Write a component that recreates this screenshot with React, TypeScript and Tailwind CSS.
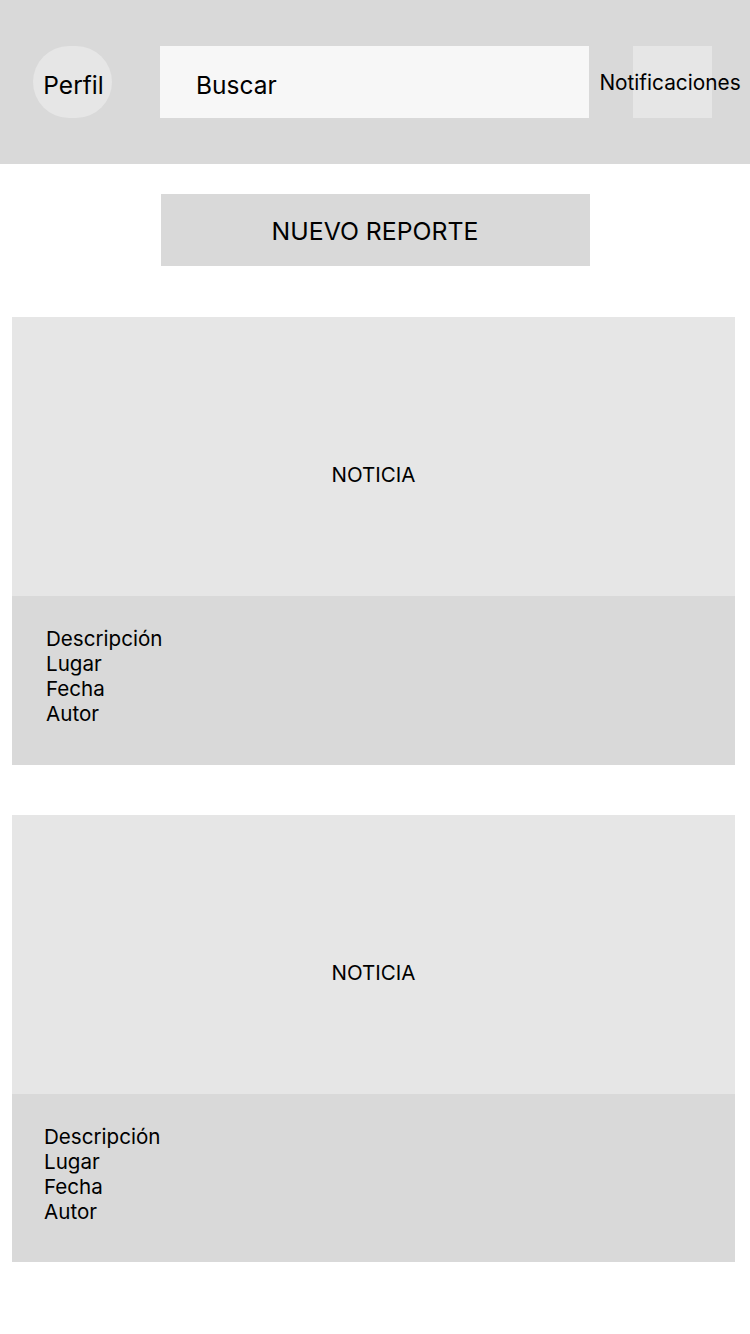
import React from 'react';

const font = { fontFamily: 'Inter, "Noto Sans", sans-serif' };

interface CardProps {
  textPad: string;
  bottomH: string;
}

const NewsCard: React.FC<CardProps> = ({ textPad, bottomH }) => (
  <div className="mx-[12px] w-[723px]">
    <div className="h-[279px] bg-[#e6e6e6] flex justify-center pt-[145px]">
      <span className="text-[20.5px] leading-[25px] text-black">NOTICIA</span>
    </div>
    <div className={`${bottomH} bg-[#d9d9d9] pt-[30px] ${textPad}`}>
      <div className="text-[20.6px] leading-[25px] text-black">
        <div>Descripción</div>
        <div>Lugar</div>
        <div>Fecha</div>
        <div>Autor</div>
      </div>
    </div>
  </div>
);

export default function App() {
  return (
    <div className="w-[750px] min-h-[1334px] bg-white" style={font}>
      <header className="h-[164px] bg-[#d9d9d9] flex items-center">
        <div className="ml-[33px] w-[79px] h-[72px] rounded-full bg-[#e6e6e6] flex items-center justify-center pt-[7px] pl-[2px]">
          <span className="text-[24.5px] text-black">Perfil</span>
        </div>
        <div className="ml-[48px] w-[429px] h-[72px] bg-[#f7f7f7] flex items-center pl-[36px] pt-[7px]">
          <span className="text-[24.5px] text-black">Buscar</span>
        </div>
        <div className="ml-[44px] w-[79px] h-[72px] bg-[#e6e6e6] flex justify-center pt-[24px] pr-[5px]">
          <span className="text-[20.8px] leading-[25px] text-black whitespace-nowrap">Notificaciones</span>
        </div>
      </header>

      <div className="flex justify-center mt-[30px]">
        <button className="w-[429px] h-[72px] bg-[#d9d9d9] flex items-center justify-center pt-[4px] text-[24.8px] text-black">
          NUEVO REPORTE
        </button>
      </div>

      <div className="mt-[51px] flex flex-col gap-[50px]">
        <NewsCard textPad="pl-[34px]" bottomH="h-[169px]" />
        <NewsCard textPad="pl-[32px]" bottomH="h-[168px]" />
      </div>
    </div>
  );
}
